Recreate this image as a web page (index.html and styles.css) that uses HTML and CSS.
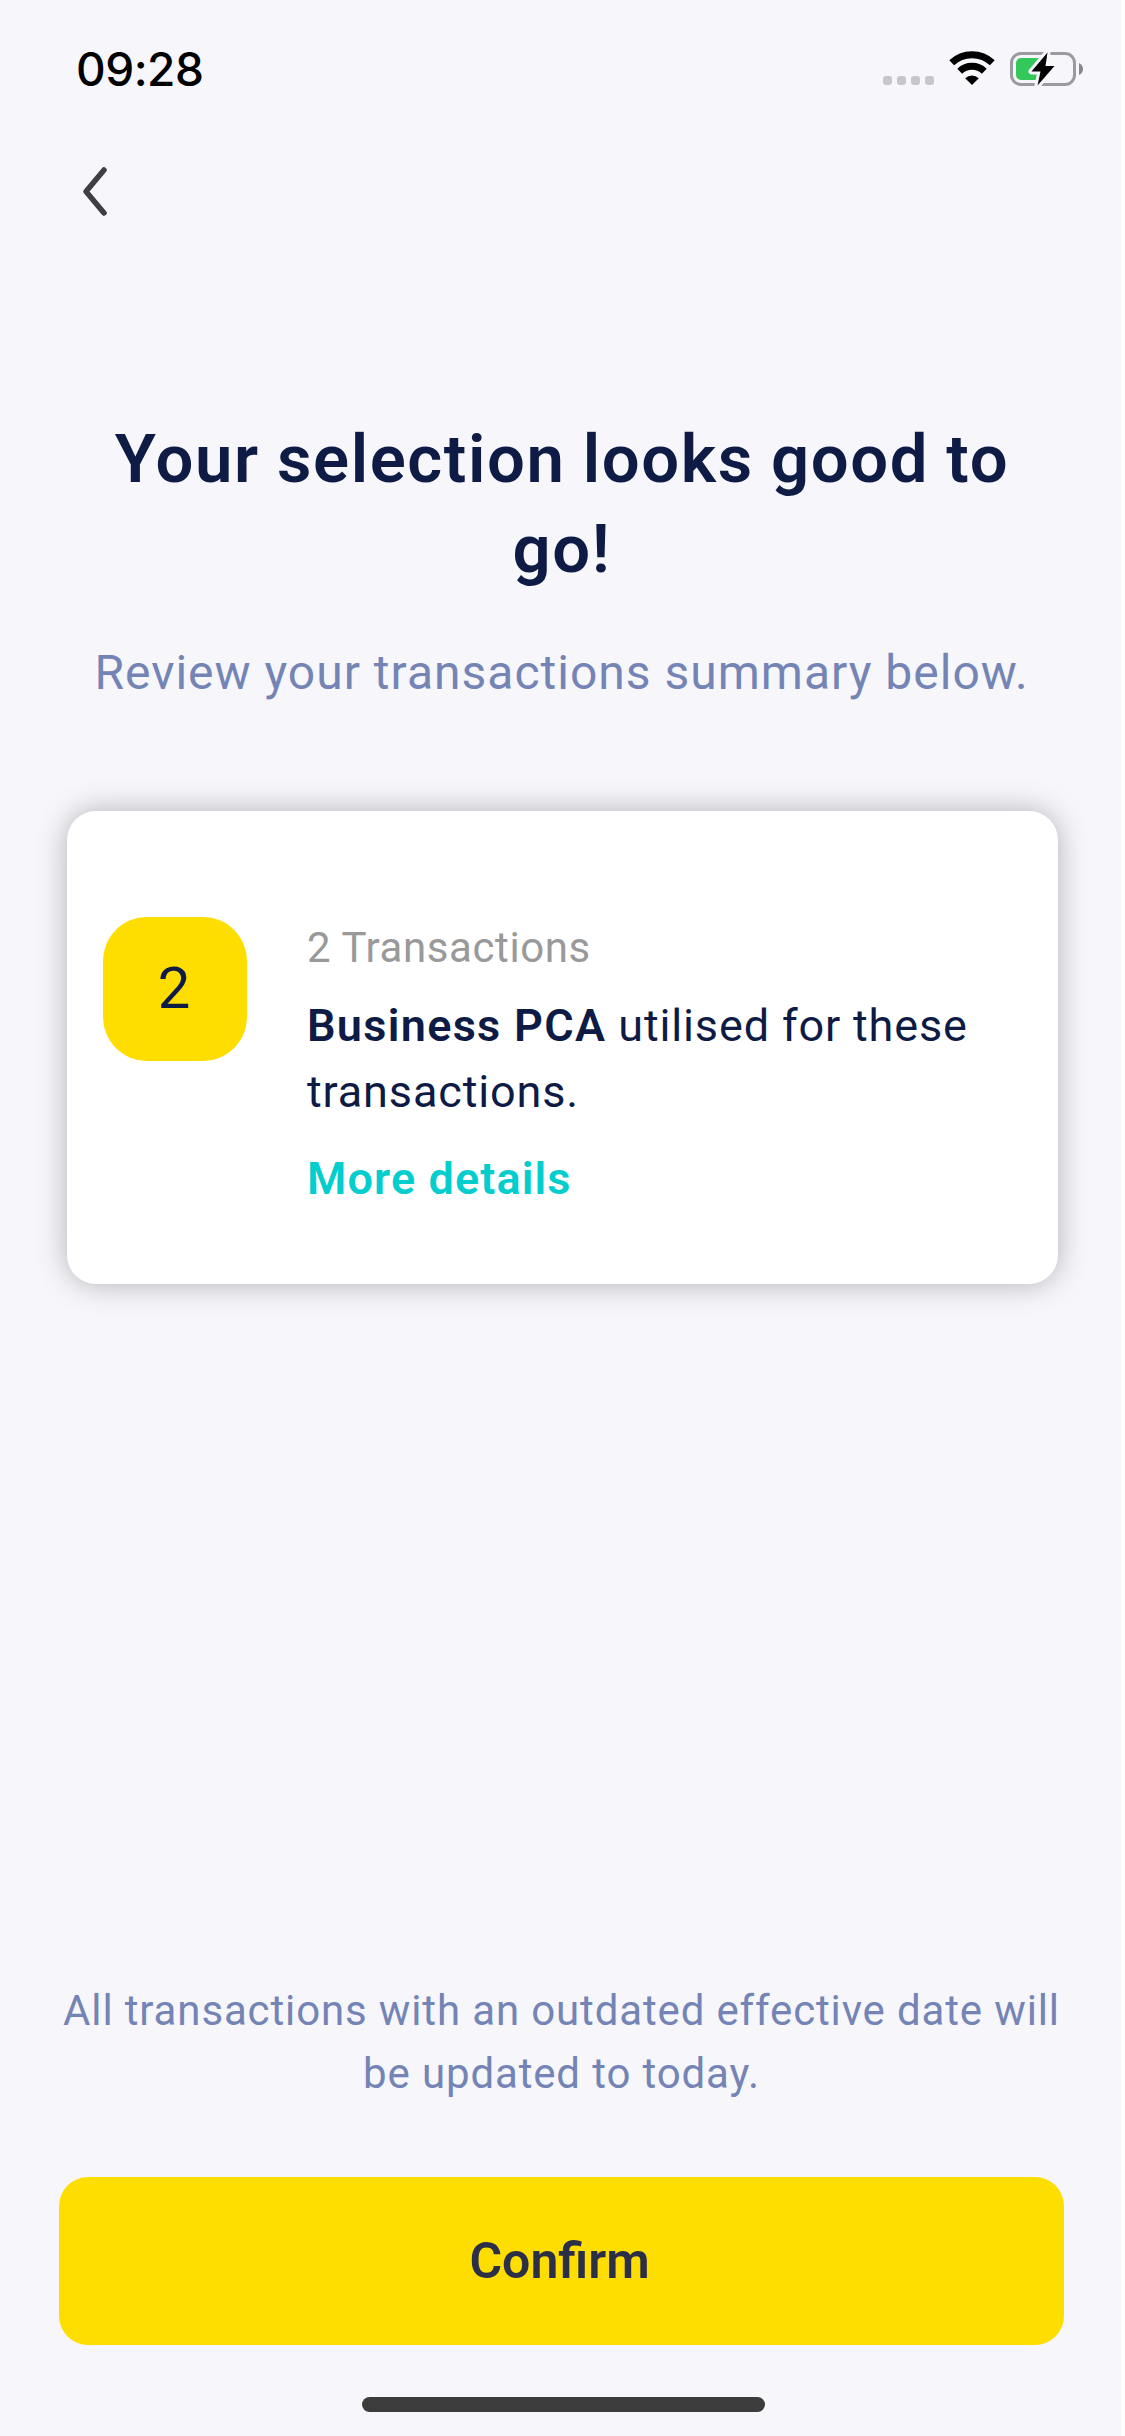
FILE: index.html
```html
<!DOCTYPE html>
<html lang="en">
<head>
<meta charset="utf-8">
<title>Review transactions</title>
<link rel="stylesheet" href="styles.css">
</head>
<body>
<div class="screen">
  <header class="status">
    <span class="time">09:28</span>
    <svg class="status-icons" width="204" height="40" viewBox="0 0 204 40">
      <g fill="#c6c6cb"><rect x="3" y="26" width="9" height="9" rx="3"/><rect x="17" y="26" width="9" height="9" rx="3"/><rect x="31" y="26" width="9" height="9" rx="3"/><rect x="45" y="26" width="9" height="9" rx="3"/></g>
      <g fill="none" stroke="#000" stroke-width="7">
        <path d="M71.700 12.800A29.500 29.500 0 0 1 112.300 12.800"/>
        <path d="M79.700 21.200A18 18 0 0 1 104.300 21.200"/>
      </g>
      <path d="M92 35l-6.800-6.800a9.800 9.800 0 0 1 13.600 0z"/>
      <rect x="131.500" y="3.500" width="63" height="31" rx="9.500" fill="none" stroke="#9b9b9f" stroke-width="3"/>
      <path d="M199 13q4 2 4 6t-4 6z" fill="#88888c"/>
      <rect x="136" y="8" width="28" height="22" rx="5" fill="#34c759"/>
      <path d="M167.500 2.500L151.500 21.500h9l-3 14L174.500 16h-9z" fill="#000" stroke="#f6f6fb" stroke-width="6" stroke-linejoin="round" paint-order="stroke"/>
    </svg>
  </header>
  <nav class="nav">
    <svg width="32" height="56" viewBox="0 0 32 56" fill="none" stroke="#3e3e43" stroke-width="5.500" stroke-linecap="round" stroke-linejoin="round"><path d="M24 6L6 27.500l18 21.500"/></svg>
  </nav>
  <main class="main">
    <h1 class="title">Your selection looks good to<br>go!</h1>
    <p class="subtitle">Review your transactions summary below.</p>
    <section class="card">
      <div class="badge">2</div>
      <div class="details">
        <p class="count">2 Transactions</p>
        <p class="desc"><strong>Business PCA</strong> utilised for these<br>transactions.</p>
        <a class="more">More details</a>
      </div>
    </section>
  </main>
  <footer class="footer">
    <p class="note">All transactions with an outdated effective date will<br>be updated to today.</p>
    <button class="confirm">Confirm</button>
    <div class="home"></div>
  </footer>
</div>
</body>
</html>
```
FILE: styles.css
```css
* { box-sizing: border-box; }
body { margin: 0; background: #fff; }
p, h1 { margin: 0; }
.screen { width: 1121px; height: 2436px; display: flex; flex-direction: column; background: #f6f6fb; font-family: Roboto, "Liberation Sans", sans-serif; color: #0e1b45; overflow: hidden; }
.status { height: 140px; padding: 50px 37px 0 76px; display: flex; justify-content: space-between; align-items: flex-start; }
.time { font: 550 46px/38px Inter, sans-serif; color: #000; letter-spacing: -0.5px; }
.status-icons { display: block; }
.nav { height: 100px; padding: 24px 80px; }
.main { padding: 0 63px 0 67px; }
.title { margin: 174px 1px 0 0; font-size: 67px; line-height: 90px; font-weight: 600; text-align: center; white-space: nowrap; letter-spacing: 1.6px; word-spacing: -1px; }
.subtitle { margin: 49px 2px 0 0; font-size: 48px; line-height: 60px; color: #7484b5; text-align: center; white-space: nowrap; letter-spacing: 1px; }
.card { margin-top: 108px; height: 473px; padding: 106px 35px 0 36px; display: flex; gap: 60px; background: #fff; border-radius: 29px; box-shadow: 0 0 30px rgba(0,0,0,.28); }
.badge { flex: none; width: 144px; height: 144px; padding: 0 2px 2px 0; border-radius: 44px; background: #fedd00; display: flex; align-items: center; justify-content: center; font-size: 58px; }
.details { white-space: nowrap; }
.count { margin-top: 7px; font-size: 42px; line-height: 48px; color: #999; letter-spacing: 0.6px; }
.desc { margin-top: 21px; font-size: 45px; line-height: 66px; letter-spacing: 0.85px; }
.desc strong { font-weight: 600; letter-spacing: 1.3px; }
.more { display: block; margin-top: 29px; font-size: 45px; line-height: 50px; font-weight: 600; color: #03cdcd; letter-spacing: 1.1px; }
.footer { margin-top: auto; padding: 0 57px 24px 59px; display: flex; flex-direction: column; align-items: center; }
.note { font-size: 42px; line-height: 63px; color: #7484b5; text-align: center; white-space: nowrap; letter-spacing: 0.86px; }
.confirm { margin-top: 72px; width: 100%; height: 168px; padding: 0 4px 0 0; border: 0; border-radius: 29px; background: #fedd00; color: #2c3046; font: 600 50px/60px Roboto, sans-serif; }
.home { margin: 52px 0 0 3px; width: 403px; height: 15px; border-radius: 8px; background: #3c3c3d; }
```
